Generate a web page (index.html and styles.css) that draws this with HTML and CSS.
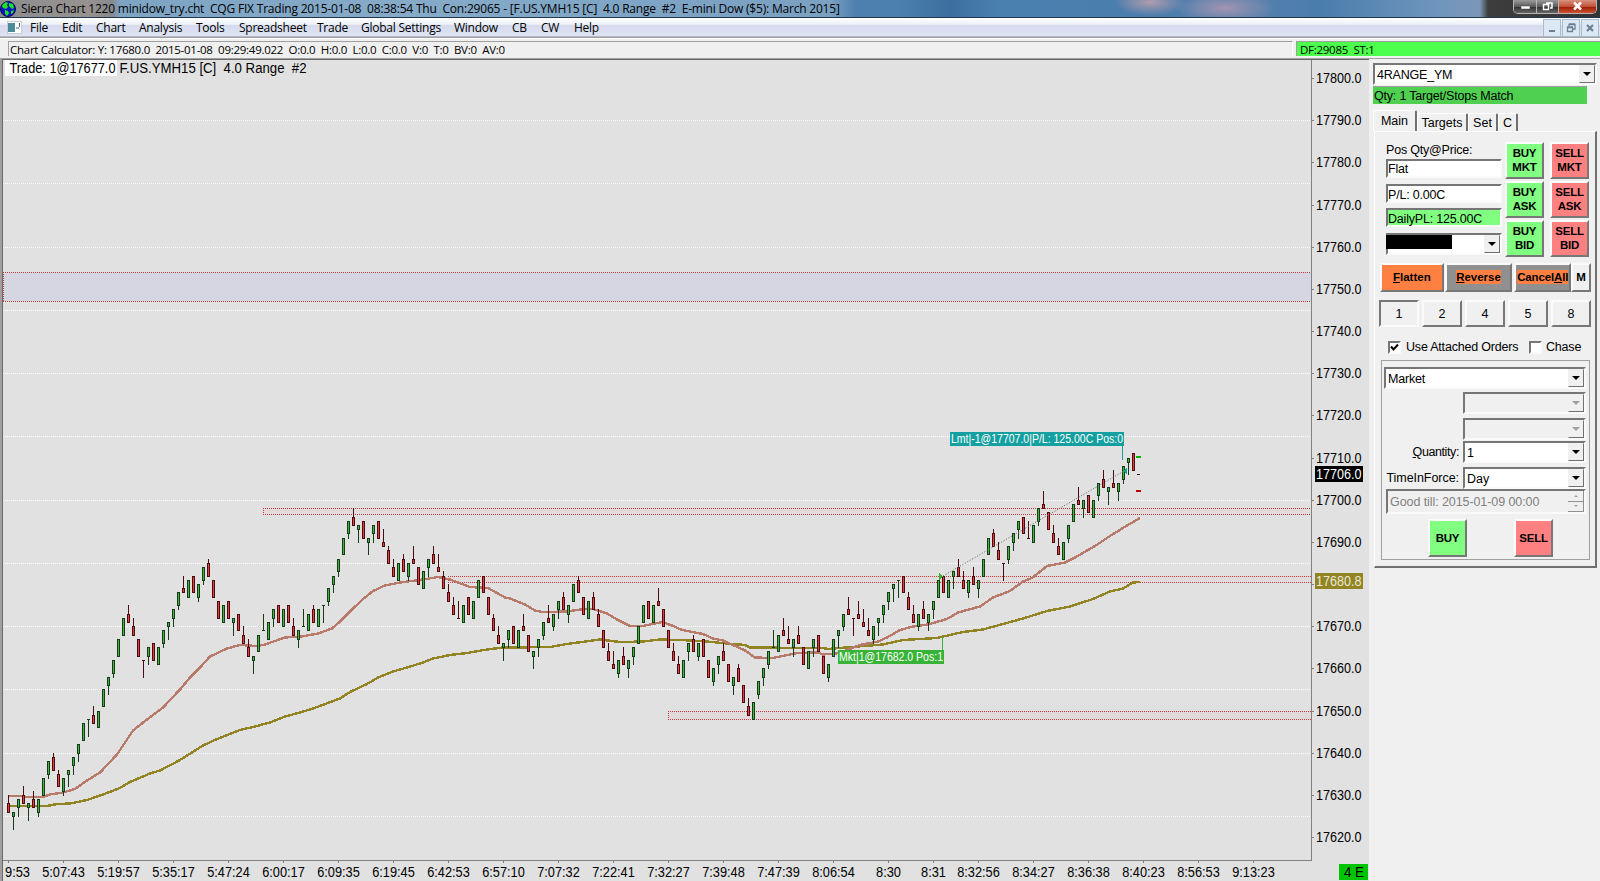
FILE: index.html
```
<!DOCTYPE html>
<html>
<head>
    <meta charset="utf-8" />
    <meta name="viewport" content="width=device-width, initial-scale=1" />
    <title>Sierra Chart</title>
    <link rel="stylesheet" href="styles.css">
</head>
<body>
    <div class="titlebar">
        <svg class="globe" width="16" height="16" viewBox="0 0 16 16">
            <circle cx="8" cy="8" r="7.5" fill="#0a14c8" stroke="#050a50" />
            <path d="M3 3l3-2 2 1-1 2 1 2-2 2-3-1-1-2zM9 2l4 1 1 4-2 1-2-2-1-1zM5 9l3 1 1 2-2 3-2-2zM11 10l3-1-1 3-2 1z" fill="#20e020" />
        </svg>
        <span class="title">Sierra Chart 1220 minidow_try.cht  CQG FIX Trading 2015-01-08  08:38:54 Thu  Con:29065 - [F.US.YMH15 [C]  4.0 Range  #2  E-mini Dow ($5): March 2015]</span>
        <div class="win-buttons">
            <span class="win-min"><svg width="22" height="13"><rect x="7" y="6" width="9" height="3" fill="#fff" stroke="#444" stroke-width=".5" /></svg></span>
            <span class="win-max"><svg width="21" height="13"><path d="M9 3h6v5h-2M6.500 4.500h5v5h-5z" fill="none" stroke="#fff" stroke-width="1.500" /></svg></span>
            <span class="win-close"><svg width="37" height="13"><path d="M15 2.500l7 7M22 2.500l-7 7" stroke="#fff" stroke-width="2.500" /></svg></span>
        </div>
    </div>

    <div class="menubar">
        <svg class="menu-icon" width="15" height="13">
            <rect x=".5" y=".5" width="14" height="12" fill="#fff" stroke="#c8ccd4" />
            <rect x="1" y="2" width="7" height="9" fill="#4a8c9c" />
            <path d="M9 7h3M12.500 2v4" stroke="#3c5c88" />
        </svg>
        <div class="menu">
            <span>File</span><span>Edit</span><span>Chart</span><span>Analysis</span><span>Tools</span><span>Spreadsheet</span><span>Trade</span><span>Global Settings</span><span>Window</span><span>CB</span><span>CW</span><span>Help</span>
        </div>
        <div class="mdi-buttons">
            <span><svg width="16" height="16"><path d="M5 11h6" stroke="#6d7f92" stroke-width="2" /></svg></span>
            <span><svg width="16" height="16"><path d="M6 6V4.500h6V9h-2M4.500 7.500h5v4h-5zM4 7h6M6 4h6" fill="none" stroke="#6d7f92" stroke-width="1.300" /></svg></span>
            <span><svg width="16" height="16"><path d="M5 5l6 6M11 5l-6 6" stroke="#6d7f92" stroke-width="2.200" /></svg></span>
        </div>
    </div>

    <div class="statusbar">
        <div class="status-calc">Chart Calculator: Y: 17680.0  2015-01-08  09:29:49.022  O:0.0  H:0.0  L:0.0  C:0.0  V:0  T:0  BV:0  AV:0</div>
        <div class="status-feed">DF:29085  ST:1</div>
    </div>

    <div class="main">
        <svg id="chart" class="chart" width="1369" height="823" viewBox="0 58 1369 823"></svg>

        <div class="panel">
            <div class="combo combo-config"><span>4RANGE_YM</span><i class="drop"></i></div>
            <div class="match">Qty: 1 Target/Stops Match</div>
            <div class="tabs">
                <span class="tab active">Main</span><span class="tab targets">Targets</span><span class="tab set">Set</span><span class="tab c">C</span>
            </div>
            <div class="page">
                <div class="position">
                    <div class="fields">
                        <label>Pos Qty@Price:</label>
                        <div class="field flat">Flat</div>
                        <div class="field">P/L: 0.00C</div>
                        <div class="field daily">DailyPL: 125.00C</div>
                        <div class="combo account"><b class="redacted"></b><i class="drop"></i></div>
                    </div>
                    <div class="quick">
                        <div class="btn buy">BUY<br>MKT</div>
                        <div class="btn sell">SELL<br>MKT</div>
                        <div class="btn buy">BUY<br>ASK</div>
                        <div class="btn sell">SELL<br>ASK</div>
                        <div class="btn buy">BUY<br>BID</div>
                        <div class="btn sell">SELL<br>BID</div>
                    </div>
                </div>
                <div class="actions">
                    <div class="btn flatten"><span><u>F</u>latten</span></div>
                    <div class="btn gray reverse"><span><u>R</u>everse</span></div>
                    <div class="btn gray cancel"><span>Cancel<u>A</u>ll</span></div>
                    <div class="btn m">M</div>
                </div>
                <div class="sizes">
                    <div class="btn pressed">1</div>
                    <div class="btn">2</div>
                    <div class="btn">4</div>
                    <div class="btn">5</div>
                    <div class="btn">8</div>
                </div>
                <div class="checks">
                    <i class="check"><svg width="9" height="9"><path d="M1 3.500l2.500 3L8 1.500" fill="none" stroke="#000" stroke-width="2" /></svg></i>
                    <span class="attached">Use Attached Orders</span>
                    <i class="check"></i>
                    <span class="chase">Chase</span>
                </div>
                <div class="order">
                    <div class="combo type"><span>Market</span><i class="drop"></i></div>
                    <div class="row r1"><div class="combo off"><i class="drop"></i></div></div>
                    <div class="row r2"><div class="combo off"><i class="drop"></i></div></div>
                    <div class="row r3"><label><u>Q</u>uantity:</label><div class="combo"><span>1</span><i class="drop"></i></div></div>
                    <div class="row r4"><label>TimeInForce:</label><div class="combo"><span>Day</span><i class="drop"></i></div></div>
                    <div class="till">
                        <span>Good till: 2015-01-09 00:00</span>
                        <div class="spin"><i class="up"></i><i class="down"></i></div>
                    </div>
                    <div class="send">
                        <div class="btn buy">BUY</div>
                        <div class="btn sell">SELL</div>
                    </div>
                </div>
            </div>
        </div>
    </div>

    <script src="chart.js"></script>
</body>
</html>
```

FILE: styles.css
```
html, body {
    margin: 0;
    height: 100%;
    width: 100%;
    overflow: hidden;
    background-color: #f0f0f0;
    color: black;
    font: 12.5px "Liberation Sans", Arial, sans-serif;
}

body {
    display: flex;
    flex-direction: column;
}

i {
    font-style: normal;
}

/* window frame */

.titlebar {
    height: 17px;
    flex: none;
    display: flex;
    align-items: center;
    overflow: hidden;
    background:
        radial-gradient(ellipse 36px 14px at 1150px 2px, #b09cae, transparent),
        radial-gradient(ellipse 50px 16px at 1225px 8px, #a394b0, transparent),
        linear-gradient(90deg, #8c8c90 0, #97928f 90px, #85898d 112px, #7ea4c4 120px, #86abc9 400px, #7ca3c4 700px, #7ba1c2 830px, #4d80ae 856px, #4c80ae 900px, #3c6f9f 950px, #4a80b0 1000px, #4a7dac 1150px, #5581ad 1250px, #4a7dac 1320px, #7096bd 1440px, #7c96b5 1480px, #3d3d3d 1488px, #333 1600px);
    border-bottom: 1px solid #20364c;
}

.globe {
    flex: none;
}

.title {
    flex: 1;
    margin-left: 5px;
    white-space: pre;
    font: 12px/17px "Open Sans", sans-serif;
    letter-spacing: -0.2px;
}

.win-buttons {
    display: flex;
    align-self: flex-start;
    height: 13px;
    margin-right: 3px;
    border: 1px solid #b4b4b4;
    border-top: none;
    border-radius: 0 0 5px 5px;
    overflow: hidden;
}

.win-buttons span {
    height: 13px;
    background: linear-gradient(#9a9a9a, #5c5c5c 50%, #333 55%, #666);
}

.win-min, .win-max {
    border-right: 1px solid #b4b4b4;
}

.win-buttons .win-close {
    background: linear-gradient(#d8917f, #c0523a 50%, #9c2008 55%, #d05030);
}

.win-buttons svg, .mdi-buttons svg {
    display: block;
}

.menubar {
    height: 17px;
    flex: none;
    display: flex;
    align-items: center;
    padding: 1px 0 0 7px;
    background: linear-gradient(#fff, #edf0f7 35%, #d5dbed 42%, #dfe4f4);
    border-bottom: 1px solid #b4b8c8;
}

.menu {
    flex: 1;
    display: grid;
    grid-template-columns: 32px 34px 43px 57px 43px 78px 44px 93px 58px 29px 33px 40px;
    margin: 1px 0 0 8px;
    font: 12px/18px "Open Sans", sans-serif;
    letter-spacing: -0.25px;
    white-space: nowrap;
}

.mdi-buttons {
    display: flex;
    gap: 1px;
    margin: 1px 1px 0 0;
}

.mdi-buttons span {
    width: 16px;
    height: 16px;
    border: 1px solid #a8bccc;
    background-color: #dce9f5;
}

.statusbar {
    height: 15px;
    flex: none;
    display: flex;
    gap: 3px;
    padding: 3px 0 2px 8px;
    border-top: 1px solid #a0a0a0;
    box-shadow: inset 0 1px #fff;
    font: 11.5px/15px "Open Sans", sans-serif;
    letter-spacing: -0.27px;
    white-space: pre;
}

.status-calc {
    width: 1282px;
    padding-left: 1px;
    border: 1px solid #a0a0a0;
    border-right-color: #fff;
    border-bottom: none;
}

.status-feed {
    flex: 1;
    padding-left: 3px;
    border: 1px solid #a0a0a0;
    border-width: 1px 0 0 1px;
    background-color: #4dff4d;
}

.main {
    flex: 1;
    display: flex;
    min-height: 0;
}

/* chart */

.chart {
    flex: none;
    display: block;
    background-color: #e1e1e1;
    shape-rendering: crispEdges;
}

.chart text {
    font: 14px "Liberation Sans", Arial, sans-serif;
    white-space: pre;
}

.chart .fill-label {
    font-size: 12px;
    fill: white;
}

.chart .trade-line {
    shape-rendering: auto;
}

/* trade panel */

.panel {
    width: 231px;
    padding: 4px 3px 0 4px;
    border-top: 1px solid #a0a0a0;
    box-sizing: border-box;
    letter-spacing: -0.2px;
}

.combo, .field, .till, .check {
    box-sizing: border-box;
    background-color: white;
    border: 2px solid;
    border-color: #767676 #fafafa #fafafa #767676;
}

.combo {
    display: flex;
    justify-content: space-between;
    height: 22px;
    line-height: 20px;
}

.combo span {
    padding-left: 2px;
}

.combo.off {
    background-color: #f0f0f0;
}

.drop {
    width: 16px;
    margin-left: auto;
    display: flex;
    justify-content: center;
    align-items: center;
    box-sizing: border-box;
    background-color: #f0f0f0;
    border: 1px solid;
    border-color: #f0f0f0 #707070 #707070 #f0f0f0;
}

.drop::after {
    content: "";
    border: 4px solid transparent;
    border-top-color: black;
    border-bottom: none;
}

.off .drop::after {
    border-top-color: #a0a0a0;
}

.match {
    width: 214px;
    height: 18px;
    margin-top: 1px;
    padding-left: 1px;
    box-sizing: border-box;
    border-top: 1px solid #a0a0a0;
    background-color: #50d050;
    line-height: 18px;
}

.tabs {
    display: flex;
    align-items: flex-end;
    height: 21px;
    margin-top: 6px;
    letter-spacing: 0;
}

.tab {
    height: 18px;
    box-sizing: border-box;
    border: 1px solid #fff;
    border-right: 2px solid #707070;
    border-bottom: none;
    border-radius: 2px 2px 0 0;
    text-align: center;
    line-height: 19px;
}

.tab.active {
    width: 44px;
    height: 21px;
    line-height: 20px;
}

.targets {
    width: 51px;
}

.set {
    width: 30px;
}

.tab.c {
    width: 20px;
}

.page {
    height: 437px;
    margin-left: 1px;
    padding: 10px 4px 0 5px;
    box-sizing: border-box;
    border: 1px solid #fff;
    border-right: 2px solid #707070;
    border-bottom: 2px solid #707070;
}

.position {
    display: flex;
    justify-content: space-between;
    height: 121px;
    padding: 0 2px 0 6px;
}

.fields {
    width: 116px;
}

.fields label {
    display: block;
    height: 17px;
    line-height: 17px;
}

.field {
    height: 19px;
    margin-bottom: 5px;
    line-height: 18px;
}

.field.flat {
    margin-bottom: 6px;
    line-height: 17px;
}

.field.daily {
    background-color: #80ff80;
}

.account {
    margin-top: 6px;
}

.redacted {
    width: 66px;
    height: 14px;
    margin-left: -2px;
    background-color: black;
}

.quick {
    display: grid;
    grid-template-columns: 39px 39px;
    grid-auto-rows: 37px;
    gap: 2px 6px;
    align-content: start;
}

.btn {
    display: flex;
    justify-content: center;
    align-items: center;
    box-sizing: border-box;
    border: 2px solid;
    border-color: #fbfbfb #777 #777 #fbfbfb;
    text-align: center;
    font-weight: bold;
    font-size: 11.5px;
    line-height: 14px;
}

.quick .btn, .actions .btn {
    padding-bottom: 2px;
}

.buy {
    background-color: #80ff80;
}

.sell {
    background-color: #ff8080;
}

.actions {
    display: flex;
    height: 29px;
    letter-spacing: 0;
}

.flatten {
    width: 64px;
    background-color: #ff8040;
}

.gray {
    background-color: #909090;
}

.gray span {
    background-color: #ff8040;
}

.reverse {
    width: 68px;
    margin-left: 1px;
}

.cancel {
    width: 57px;
    margin-left: 2px;
    letter-spacing: -0.15px;
}

.m {
    width: 20px;
}

.sizes {
    display: flex;
    justify-content: space-between;
    height: 27px;
    margin: 8px 0 0 -1px;
}

.sizes .btn {
    width: 40px;
    font-weight: normal;
    font-size: 12.5px;
}

.sizes .pressed {
    border-color: #777 #fbfbfb #fbfbfb #777;
}

.checks {
    display: flex;
    align-items: center;
    height: 14px;
    margin: 13px 0 0 8px;
}

.check {
    width: 13px;
    height: 13px;
}

.check svg {
    display: block;
}

.attached {
    width: 117px;
    margin: 0 6px 0 5px;
}

.chase {
    margin-left: 4px;
}

.order {
    height: 200px;
    margin: 6px 0 0 1px;
    padding: 6px 3px 0 2px;
    box-sizing: border-box;
    border: 1px solid #a0a0a0;
    width: 209px;
}

.row {
    display: flex;
    justify-content: flex-end;
    align-items: center;
}

.row label {
    margin-right: 4px;
}

.row .combo {
    width: 123px;
}

.r1 {
    margin-top: 3px;
}

.r2, .r4 {
    margin-top: 4px;
}

.r3 {
    margin-top: 1px;
    letter-spacing: -0.4px;
}

.r4 {
    letter-spacing: -0.05px;
}

.till {
    display: flex;
    justify-content: space-between;
    height: 25px;
    margin-left: 2px;
    padding-left: 2px;
    background-color: #f0f0f0;
    color: #808080;
    line-height: 22px;
    letter-spacing: -0.08px;
}

.spin {
    width: 16px;
    display: grid;
}

.spin i {
    display: flex;
    justify-content: center;
    align-items: center;
    border-bottom: 1px solid #909090;
    border-right: 1px solid #909090;
}

.spin i::after {
    content: "";
    border: 2px solid transparent;
}

.spin .up::after {
    border-top: none;
    border-bottom-color: #a0a0a0;
}

.spin .down::after {
    border-bottom: none;
    border-top-color: #a0a0a0;
}

.send {
    display: flex;
    gap: 47px;
    margin: 5px 0 0 44px;
}

.send .btn {
    width: 39px;
    height: 38px;
}
```

FILE: chart.js
```
const svg = document.getElementById("chart");

// Range bars, 4 points each: g = up (body hangs from the high), r = down (body
// sits on the low), G/R = open equals close, second number is the tick's
// distance from the high. First number is the high, minus 17600.
const bars = `
r30,2 g26,1 g29,2 r32,2 g28,1 r31,2 g29,3 g34,4 g38,3 r40,3 r36,3 g34,3 g36,1 g39,2 g42,2 g47,4
G48,0 r51,2 g50,4 g55,4 g58,2 g62,3 g67,4 g72,4 r75,2 r72,2 r67,4 R62,0 g65,2 r66,4 g65,4 g69,3
g71,1 g74,2 g78,3 r82,1 g81,4 r82,4 g80,3 g84,3 r86,3 r81,4 r76,4 g75,4 r76,4 g72,1 r73,4 r70,2
r67,2 g63,1 g68,4 G73,4 g71,4 g74,2 r75,4 g74,4 r75,4 r72,2 g69,2 G74,4 g73,4 r75,3 g74,4 G75,0
g79,3 g82,2 g86,3 g91,4 g95,3 r98,2 g94,1 r95,4 g91,1 g94,2 r95,4 r93,1 r89,3 r86,2 g85,4 r87,3
g85,3 r89,1 r84,4 g83,4 g86,2 r89,2 r87,1 r83,3 r80,2 r77,2 R76,4 g75,4 r77,4 g76,4 g81,4 r82,4
r77,4 r73,3 r70,2 g66,1 g69,2 r70,4 g69,4 r73,1 r68,4 g64,1 g67,2 g71,3 r75,1 g73,3 g76,2 r78,3
g75,2 g80,4 r82,3 r77,4 g76,4 r78,3 r74,3 r69,4 r66,2 r64,1 g62,3 r65,2 g62,2 g65,2 g70,4 g75,4
r76,4 g75,4 r79,1 r74,4 r69,4 r66,2 r63,2 g62,4 g66,2 r68,3 g66,3 r67,4 r62,4 g60,3 g63,2 r66,2
r61,4 g58,2 r61,3 r56,4 r53,2 g52,4 g57,3 g60,2 g64,3 G69,4 g68,4 r72,1 r70,1 g67,2 r70,2 r65,4
g64,4 g67,2 r68,4 r63,4 g61,3 g67,4 g69,1 g73,3 r77,1 R72,0 r76,1 r74,1 r72,1 g70,3 g72,1 g75,2
g78,2 g80,1 G81,0 r82,4 r78,3 r75,2 g73,3 r76,2 g73,2 g76,2 g81,4 r82,4 g81,4 g83,1 r86,2 r83,2
g81,3 r84,2 g81,2 g86,4 g91,4 r93,3 r90,2 R85,0 g89,3 g92,2 g95,2 r96,4 R95,4 g94,4 g98,3 r102,1
r97,4 r94,2 r91,2 g90,4 g94,3 g99,4 r103,1 g100,2 r101,4 g100,4 g104,3 r107,2 g103,1 r107,1 g104,2
g108,3 g110,1 r111,4`.trim().split(/\s+/);

const fastAverage = "8,796 23,796 25,797 43,797 50,794.5 63,792.5 75,789 87,780.5 100,772.5 117,754.5 133,730.5 147,719.5 163,707.5 180,689.5 190,677.5 200,667.5 210,656.5 227,648.5 240,645 257,646 265,644.5 285,637.5 302,636.5 318,633.5 332,628.5 340,621.5 350,611.5 362,600 373,591 385,585.5 400,582.5 423,579.5 438,577 450,579.5 470,587 488,588 505,597.5 510,598.5 525,604.5 535,610.5 542,612 567,611.5 580,609.5 593,609 607,613.5 617,619.5 630,626 643,626 662,622 672,625.5 682,630 703,634 713,638.5 723,640.5 733,645 745,650.5 755,657.5 773,658 790,654.5 798,653 818,652.5 823,654.5 840,653 860,645 878,641.5 887,637.5 900,630 913,626.5 928,624.5 947,619 958,612.5 980,606.5 993,597.5 1010,591 1023,581.5 1032,578 1047,566 1065,562.5 1075,557.5 1095,546 1110,536 1127,525.5 1140,518";
const slowAverage = "8,806 47,806 57,804 70,803.5 87,800 103,794.5 120,788 130,782 150,773.5 160,770.5 180,760 203,745.5 217,739 240,730 253,727 270,722.5 285,716.5 300,712.5 313,708.5 340,698.5 350,692 367,684 378,677.5 393,671.5 407,667.5 423,662.5 433,658.5 450,655 467,653 487,649.5 503,647.5 518,647.5 550,647 567,644 600,639.5 620,642 643,641.5 660,639.5 680,640 707,641.5 727,643.5 745,645 750,647.5 823,648 828,649 857,646.5 883,644.5 903,640 937,638 963,632 983,629.5 1003,624 1023,618.5 1047,611 1070,606.5 1093,599 1110,591.5 1123,588.5 1133,582.5 1140,582";

function y(price) {
    return Math.round(78 + (17800 - price) * 4.2167);
}

function add(name, attrs, text) {
    const el = document.createElementNS("http://www.w3.org/2000/svg", name);
    for (const key in attrs) el.setAttribute(key, attrs[key]);
    if (text) el.textContent = text;
    svg.appendChild(el);
    return el;
}

function rect(x, y, width, height, fill) {
    return add("rect", { x, y, width, height, fill });
}

function line(x1, y1, x2, y2, stroke, dash, cls) {
    add("line", { x1, y1, x2, y2, stroke, "stroke-dasharray": dash || "none", class: cls || "" });
}

function label(x, y, width, text, fill, cls) {
    add("text", { x, y, textLength: width, lengthAdjust: "spacingAndGlyphs", fill: fill || "#000", class: cls || "" }, text);
}

// price grid
for (let price = 17790; price > 17620; price -= 15) {
    line(3, y(price) + 0.5, 1311, y(price) + 0.5, "#fff", "1 1");
}

// support and resistance zones
function zone(x, top, bottom, fill) {
    rect(x, top, 1311 - x, bottom - top, fill);
    line(x, top + 0.5, 1311, top + 0.5, "#c8373c", "1 1");
    line(x, bottom + 0.5, 1311, bottom + 0.5, "#c8373c", "1 1");
    line(x + 0.5, top, x + 0.5, bottom, "#c8373c", "1 1");
}
zone(3, 272, 301, "#d6d6e2");
zone(263, 508, 514, "#e2dcdc");
zone(448, 576, 582, "#e2dcdc");
zone(668, 711, 719, "#e2dada");

add("polyline", { points: slowAverage, fill: "none", stroke: "#938423", "stroke-width": 2.4 });
add("polyline", { points: fastAverage, fill: "none", stroke: "#b87a6a", "stroke-width": 2.4 });

// candles
bars.forEach((bar, i) => {
    const x = 8 + i * 5;
    const type = bar[0];
    const [high, size] = bar.slice(1).split(",").map((n) => +n);
    const up = type.toLowerCase() === "g";
    const dark = up ? "#143c18" : "#4a0c10";
    const top = y(17600 + high);
    const bottom = y(17596 + high);
    rect(x, top, 1, bottom - top + 1, dark);
    if (type === "G" || type === "R") {
        rect(x - 1, y(17600 + high - size), 3, 1, dark);
        return;
    }
    const bodyTop = up ? top : y(17596 + high + size);
    const bodyBottom = up ? y(17600 + high - size) : bottom;
    rect(x - 1, bodyTop, 3, bodyBottom - bodyTop + 1, dark);
    rect(x, bodyTop + 1, 1, bodyBottom - bodyTop - 1, up ? "#46b43c" : "#e63c3c");
});
rect(1137, 474, 3, 1, "#4a0c10");
rect(1136, 456, 5, 2, "#00b400");
rect(1136, 490, 5, 2, "#be0000");

// fills
line(943, 576, 1124, 471, "#707070", "1.2 1.6", "trade-line");
add("path", { d: "M939 573l4 3-4 4z", fill: "#32b432" });
add("path", { d: "M1127 467l-4 4 4 3z", fill: "#14a0a0" });
rect(950, 432, 174, 14, "#14a0a0");
rect(1122, 446, 1, 14, "#14a0a0");
label(951, 443, 172, "Lmt|-1@17707.0|P/L: 125.00C Pos:0", "#fff", "fill-label");
rect(838, 650, 106, 14, "#37b437");
rect(942, 637, 1, 14, "#37b437");
label(839, 661, 104, "Mkt|1@17682.0 Pos:1", "#fff", "fill-label");

// header
rect(5, 60, 112, 16, "#fff");
label(9.5, 73, 106, "Trade: 1@17677.0");
label(119.5, 73, 187, "F.US.YMH15 [C]  4.0 Range  #2");

// price axis
rect(1311, 58, 1, 803, "#808080");
for (let price = 17800; price >= 17620; price -= 10) {
    rect(1312, y(price), 2, 1, "#808080");
    if (price !== 17680) label(1316, y(price) + 5, 45.5, price + ".0");
}
rect(1315, 466, 48, 16, "#000");
label(1316, 479, 45.5, "17706.0", "#fff");
rect(1315, 573, 48, 16, "#938423");
label(1316, 586, 45.5, "17680.8", "#e8e8d8");

// time axis
rect(3, 860, 1309, 1, "#808080");
const times = [[63, "5:07:43"], [118, "5:19:57"], [173, "5:35:17"], [228, "5:47:24"], [283, "6:00:17"], [338, "6:09:35"], [393, "6:19:45"], [448, "6:42:53"], [503, "6:57:10"], [558, "7:07:32"], [613, "7:22:41"], [668, "7:32:27"], [723, "7:39:48"], [778, "7:47:39"], [833, "8:06:54"], [888, "8:30"], [933, "8:31"], [978, "8:32:56"], [1033, "8:34:27"], [1088, "8:36:38"], [1143, "8:40:23"], [1198, "8:56:53"], [1253, "9:13:23"]];
rect(8, 861, 1, 2, "#808080");
label(5, 877, 25, "9:53");
times.forEach(([x, text]) => {
    const width = text.length > 4 ? 42.5 : 25;
    rect(x, 861, 1, 2, "#808080");
    label(x - width / 2 + 0.5, 877, width, text);
});
rect(1339, 864, 29, 16, "#00c400");
label(1344, 877, 20, "4 E");

// window edge
rect(0, 58, 1369, 1, "#a0a0a0");
rect(0, 59, 1369, 1, "#696969");
rect(0, 59, 2, 822, "#a0a0a0");
rect(2, 59, 1, 822, "#696969");
```
